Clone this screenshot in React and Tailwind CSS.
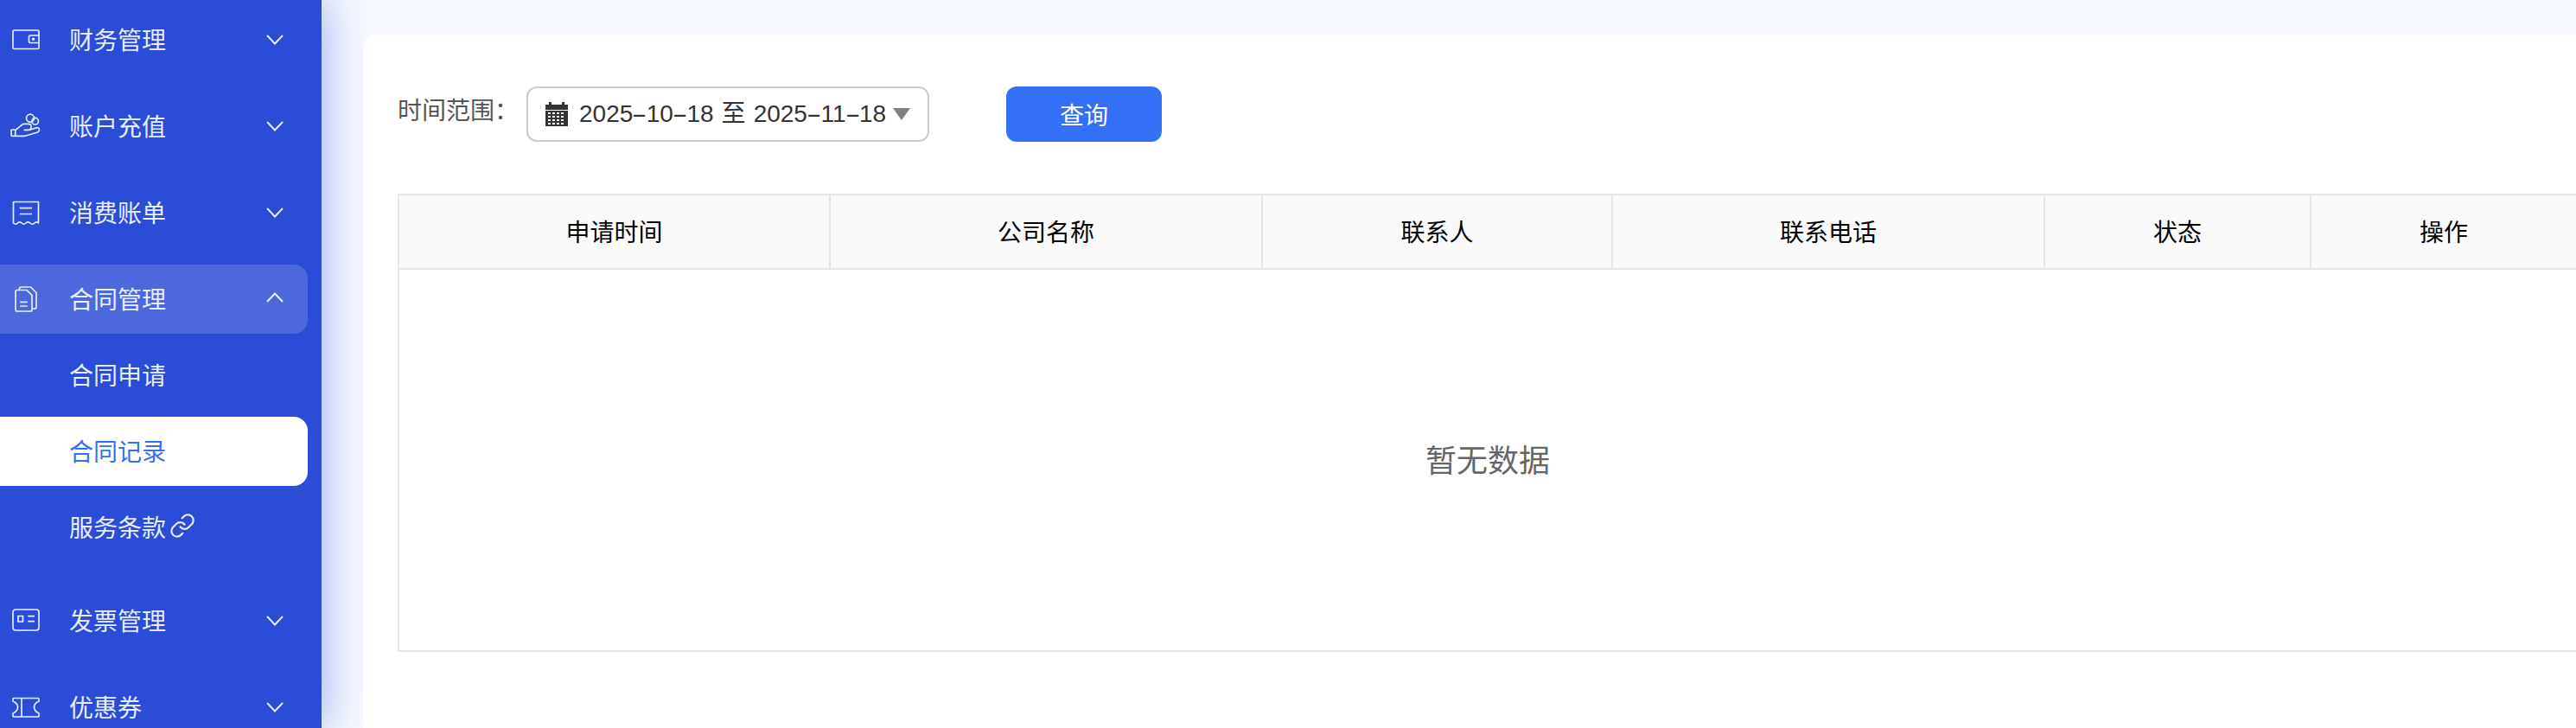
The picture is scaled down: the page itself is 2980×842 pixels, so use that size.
import React from 'react';

const WalletIcon = () => (
    <svg width="36" height="36" viewBox="0 0 36 36" fill="none" stroke="currentColor" strokeWidth="1.7" strokeLinejoin="round">
        <rect x="3" y="7" width="30" height="21.5" rx="1.5" />
        <path d="M33 13 H23 a1.5 1.5 0 0 0 -1.5 1.5 V20 a1.5 1.5 0 0 0 1.5 1.5 H33" />
        <circle cx="26.5" cy="17.2" r="0.9" fill="currentColor" />
    </svg>
);

const HandCoinIcon = () => (
    <svg width="36" height="36" viewBox="0 0 36 36" fill="none" stroke="currentColor" strokeWidth="1.7" strokeLinejoin="round" strokeLinecap="round">
        <circle cx="23" cy="8.7" r="4.5" />
        <circle cx="28.7" cy="12.2" r="3.8" />
        <rect x="1" y="22" width="4.7" height="7.3" rx="0.8" />
        <path d="M5.7 22.7 L14.7 15.3 H21.3 a2.8 2.8 0 0 1 2.7 3.4 c0 2 -1.2 3.6 -3 3.6 H16.3" />
        <path d="M23.5 21.8 L31 19.6 c2.6 -0.4 3.6 3.6 0.6 5.4 L17 29.3 H5.7" />
    </svg>
);

const ReceiptIcon = () => (
    <svg width="36" height="36" viewBox="0 0 36 36" fill="none" stroke="currentColor" strokeWidth="1.7" strokeLinejoin="round">
        <path d="M3.5 30 V5.5 H32.5 V30 q-2.4 -2.4 -4.8 0 t-4.9 0 t-4.8 0 t-4.8 0 t-4.8 0 t-4.9 0 Z" />
        <path d="M10.7 12.7 H25 M10.7 19.5 H25" />
    </svg>
);

const DocsIcon = () => (
    <svg width="36" height="36" viewBox="0 0 36 36" fill="none" stroke="currentColor" strokeWidth="1.7" strokeLinejoin="round">
        <path d="M8 7.5 H19 L25 13.5 V30 a2 2 0 0 1 -2 2 H8 a2 2 0 0 1 -2 -2 V9.5 a2 2 0 0 1 2 -2 Z" />
        <path d="M10.5 7.5 V6 a2 2 0 0 1 2 -2 H23.5 L30 10.5 V27 a2 2 0 0 1 -2 2 H25" />
        <path d="M11.3 21.3 H19.7 M11.3 26 H19.7" />
    </svg>
);

const InvoiceIcon = () => (
    <svg width="36" height="36" viewBox="0 0 36 36" fill="none" stroke="currentColor" strokeWidth="1.7" strokeLinejoin="round">
        <rect x="3" y="5" width="30" height="24" rx="3" />
        <rect x="9" y="12.5" width="5.5" height="6.5" />
        <path d="M20.3 12.7 H28 M20.3 18.7 H28" />
    </svg>
);

const TicketIcon = () => (
    <svg width="36" height="36" viewBox="0 0 36 36" fill="none" stroke="currentColor" strokeWidth="1.7" strokeLinejoin="round">
        <path d="M4 7.5 H32 a1 1 0 0 1 1 1 V11 q-5.5 2.5 -5.5 7 t5.5 7 V28 a1 1 0 0 1 -1 1 H4 a1 1 0 0 1 -1 -1 V25 q5.5 -2.5 5.5 -7 t-5.5 -7 V8.5 a1 1 0 0 1 1 -1 Z" />
        <path d="M13 7.5 V29" />
    </svg>
);

const ChainIcon = () => (
    <svg width="28" height="28" viewBox="1 1 22 22" fill="none" stroke="currentColor" strokeWidth="1.7" strokeLinecap="round" strokeLinejoin="round" className="-mt-2 ml-[5px]">
        <path d="M10 13a5 5 0 0 0 7.54.54l3-3a5 5 0 0 0-7.07-7.07l-1.72 1.71" />
        <path d="M14 11a5 5 0 0 0-7.54-.54l-3 3a5 5 0 0 0 7.07 7.07l1.71-1.71" />
    </svg>
);

const Chevron = ({ up }) => (
    <svg width="20" height="12" viewBox="0 0 20 12" fill="none" stroke="currentColor" strokeWidth="2" className={up ? 'rotate-180 -mt-1' : ''}>
        <path d="M1 1 L10 10.5 L19 1" />
    </svg>
);

const CalendarIcon = () => (
    <svg width="26" height="28" viewBox="0 0 26 28" fill="#333333">
        <rect x="4" y="0" width="3" height="5" />
        <rect x="19" y="0" width="3" height="5" />
        <path d="M0 3 H26 V9 H0 Z" />
        <path fillRule="evenodd" d="M0 10 H26 V28 H0 Z M3 12 V14 H6 V12 Z M8 12 V14 H11 V12 Z M13 12 V14 H16 V12 Z M18 12 V14 H21 V12 Z M3 16 V18 H6 V16 Z M8 16 V18 H11 V16 Z M13 16 V18 H16 V16 Z M18 16 V18 H21 V16 Z M3 20 V22 H6 V20 Z M8 20 V22 H11 V20 Z M13 20 V22 H16 V20 Z M18 20 V22 H21 V20 Z M3 24 V26 H6 V24 Z M8 24 V26 H11 V24 Z M13 24 V26 H16 V24 Z M18 24 V26 H21 V24 Z" />
    </svg>
);

// the reference font draws its hyphen about as wide as a digit
const DateText = ({ value }) => (
    <span>
        {value.split('-').map((part, i) => (
            <React.Fragment key={i}>
                {i > 0 && <span className="inline-block w-[15.5px] scale-x-[1.9] text-center">-</span>}
                {part}
            </React.Fragment>
        ))}
    </span>
);

const NavItem = ({ icon, label, open, active }) => (
    <div className={`flex h-[80px] w-[356px] items-center rounded-r-[16px] pl-3 pr-7 text-[#e9edfb] ${active ? 'bg-white/[0.16]' : ''}`}>
        {icon}
        <span className="ml-[32px] mt-[3px] flex-1 text-[28px] leading-none">{label}</span>
        <Chevron up={open} />
    </div>
);

const columns = ['申请时间', '公司名称', '联系人', '联系电话', '状态', '操作'];

const App = () => {
    return (
        <div className="flex h-[842px] w-[2980px] overflow-hidden bg-[#f5f9ff] [font-family:'Liberation_Sans','Noto_Sans_CJK_SC',sans-serif]">
            <aside className="relative z-10 w-[372px] shrink-0 bg-[#2a4cd6] pt-[6px] shadow-[0_0_50px_rgba(42,76,214,0.47)]">
                <div className="flex flex-col gap-5">
                    <NavItem icon={<WalletIcon />} label="财务管理" />
                    <NavItem icon={<HandCoinIcon />} label="账户充值" />
                    <NavItem icon={<ReceiptIcon />} label="消费账单" />
                    <div>
                        <NavItem icon={<DocsIcon />} label="合同管理" open active />
                        <div className="mt-2 mb-[28px] flex flex-col gap-2 text-[28px] leading-none">
                            <div className="flex h-[80px] w-[356px] items-center pl-[80px] pt-[4px] text-[#e9edfb]">合同申请</div>
                            <div className="flex h-[80px] w-[356px] items-center rounded-r-[16px] bg-white pl-[80px] pt-[4px] text-[#3370f5]">合同记录</div>
                            <div className="flex h-[80px] w-[356px] items-center pl-[80px] pt-[4px] text-[#e9edfb]">
                                服务条款
                                <ChainIcon />
                            </div>
                        </div>
                    </div>
                    <div className="-mt-5 flex flex-col gap-5">
                        <NavItem icon={<InvoiceIcon />} label="发票管理" />
                        <NavItem icon={<TicketIcon />} label="优惠券" />
                    </div>
                </div>
            </aside>

            <main className="ml-[48px] mt-[40px] relative z-20 flex-1 rounded-tl-[16px] bg-white pl-[40px] pt-[60px]">
                <div className="flex items-center">
                    <span className="-mt-[6px] w-[149px] text-[28px] leading-none text-[#555555]">时间范围：</span>
                    <div className="flex h-[64px] w-[466px] items-center rounded-[12px] border-2 border-[#cccccc] pl-[20px] text-[28px] leading-none text-[#333333]">
                        <CalendarIcon />
                        <span className="ml-[13px] whitespace-nowrap">
                            <DateText value="2025-10-18" />
                            <span className="mx-[9px]">至</span>
                            <DateText value="2025-11-18" />
                        </span>
                        <span className="ml-[8px] h-0 w-0 border-x-[10px] border-t-[14px] border-x-transparent border-t-[#808080]" />
                    </div>
                    <button className="ml-[89px] h-[64px] w-[180px] rounded-[12px] bg-[#3370f5] pt-[5px] text-[28px] leading-none text-white">查询</button>
                </div>

                <div className="mt-[60px] w-[2522px] border-2 border-[#e5e5e5]">
                    <div className="grid h-[86px] grid-cols-[499px_500px_405px_500px_308px_306px] border-b-2 border-[#e5e5e5] bg-[#fafafa]">
                        {columns.map((name, i) => (
                            <div key={name} className={`flex items-center justify-center pt-[4px] text-[28px] leading-none text-black ${i < 5 ? 'border-r-2 border-[#e5e5e5]' : ''}`}>
                                {name}
                            </div>
                        ))}
                    </div>
                    <div className="flex h-[440px] items-center justify-center pt-[4px] text-[36px] leading-none text-[#666666]">暂无数据</div>
                </div>
            </main>
        </div>
    );
};

export default App;
